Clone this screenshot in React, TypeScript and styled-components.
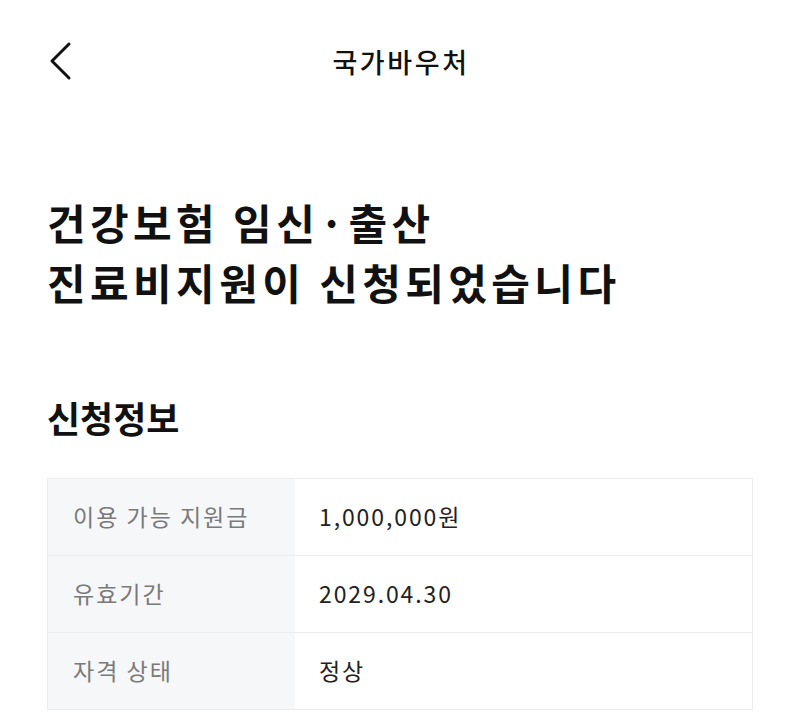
import React from "react";
import styled, { createGlobalStyle } from "styled-components";

const GlobalStyle = createGlobalStyle`
  html, body {
    margin: 0;
    padding: 0;
    background: #ffffff;
  }
  body {
    font-family: "Noto Sans CJK KR", "Noto Sans", sans-serif;
    color: #111111;
  }
`;

const rows = [
  { label: "이용 가능 지원금", value: "1,000,000원" },
  { label: "유효기간", value: "2029.04.30" },
  { label: "자격 상태", value: "정상" },
];

export default function App() {
  return (
    <>
      <GlobalStyle />
      <Page>
        <TopBar>
          <BackButton aria-label="뒤로">
            <svg width="28" height="40" viewBox="0 0 28 40" fill="none">
              <path
                d="M22 3 L5 20 L22 37"
                stroke="#111"
                strokeWidth="3"
                strokeLinecap="round"
                strokeLinejoin="round"
              />
            </svg>
          </BackButton>
          <BarTitle>국가바우처</BarTitle>
        </TopBar>

        <Headline>
          건강보험 임신·출산
          <br />
          진료비지원이 신청되었습니다
        </Headline>

        <SectionTitle>신청정보</SectionTitle>

        <InfoTable>
          {rows.map((row) => (
            <InfoRow key={row.label}>
              <Label>{row.label}</Label>
              <Value>{row.value}</Value>
            </InfoRow>
          ))}
        </InfoTable>
      </Page>
    </>
  );
}

const Page = styled.div`
  width: 800px;
  height: 711px;
  overflow: hidden;
  padding: 0 47px;
  box-sizing: border-box;
`;

const TopBar = styled.div`
  position: relative;
  height: 62px;
  margin-top: 30px;
  display: flex;
  align-items: center;
  justify-content: center;
`;

const BackButton = styled.button`
  position: absolute;
  left: 0;
  top: 50%;
  transform: translateY(-50%);
  background: none;
  border: 0;
  padding: 0;
  display: flex;
  cursor: pointer;
`;

const BarTitle = styled.h1`
  margin: 0 0 0 2px;
  font-size: 27px;
  font-weight: 500;
  letter-spacing: 2.6px;
  color: #111;
`;

const Headline = styled.h2`
  margin: 100px 0 0;
  font-size: 42px;
  line-height: 60px;
  font-weight: 700;
  letter-spacing: 4.4px;
  color: #111;
`;

const SectionTitle = styled.h3`
  margin: 82px 0 0;
  font-size: 36px;
  line-height: 46px;
  font-weight: 700;
  letter-spacing: 0;
  color: #111;
`;

const InfoTable = styled.div`
  margin-top: 38px;
  border: 1px solid #ececec;
  display: flex;
  flex-direction: column;
`;

const InfoRow = styled.div`
  display: grid;
  grid-template-columns: 247px 1fr;
  height: 76px;
  & + & {
    border-top: 1px solid #ececec;
  }
`;

const Label = styled.div`
  background: #f6f7f9;
  display: flex;
  align-items: center;
  padding-left: 25px;
  padding-bottom: 3px;
  font-size: 23px;
  color: #7a7a7a;
  letter-spacing: 2px;
`;

const Value = styled.div`
  display: flex;
  align-items: center;
  padding-left: 24px;
  padding-bottom: 3px;
  font-size: 23px;
  color: #222;
  letter-spacing: 1.9px;
`;
